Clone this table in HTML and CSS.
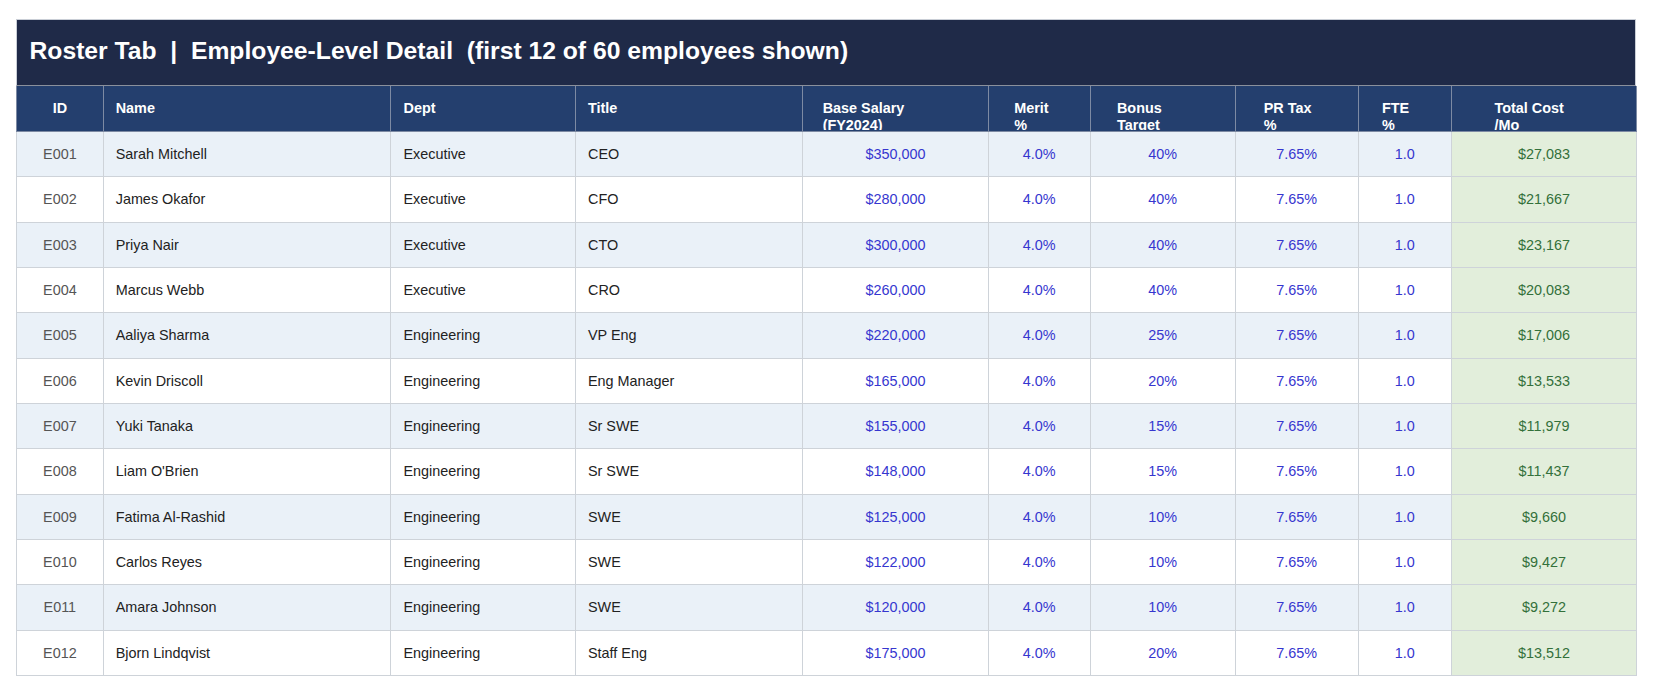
FILE: index.html
```html
<!DOCTYPE html>
<html lang="en">
<head>
<meta charset="utf-8">
<title>Roster Tab</title>
<link rel="stylesheet" href="styles.css">
</head>
<body>
<div class="sheet">
  <div class="title">Roster Tab  |  Employee-Level Detail  (first 12 of 60 employees shown)</div>
  <table class="roster">
    <colgroup>
      <col class="c-id"><col class="c-name"><col class="c-dept"><col class="c-title"><col class="c-base"><col class="c-merit"><col class="c-bonus"><col class="c-tax"><col class="c-fte"><col class="c-total">
    </colgroup>
    <thead>
      <tr>
        <th class="h-id"><div class="hd">ID</div></th>
        <th class="h-left"><div class="hd">Name</div></th>
        <th class="h-left"><div class="hd">Dept</div></th>
        <th class="h-left"><div class="hd">Title</div></th>
        <th class="h-base"><div class="hd">Base Salary
(FY2024)</div></th>
        <th class="h-merit"><div class="hd">Merit
%</div></th>
        <th class="h-bonus"><div class="hd">Bonus
Target</div></th>
        <th class="h-tax"><div class="hd">PR Tax
%</div></th>
        <th class="h-fte"><div class="hd">FTE
%</div></th>
        <th class="h-total"><div class="hd">Total Cost
/Mo</div></th>
      </tr>
    </thead>
    <tbody>
      <tr><td class="id">E001</td><td>Sarah Mitchell</td><td>Executive</td><td>CEO</td><td class="num">$350,000</td><td class="num">4.0%</td><td class="num">40%</td><td class="num">7.65%</td><td class="num">1.0</td><td class="total">$27,083</td></tr>
      <tr><td class="id">E002</td><td>James Okafor</td><td>Executive</td><td>CFO</td><td class="num">$280,000</td><td class="num">4.0%</td><td class="num">40%</td><td class="num">7.65%</td><td class="num">1.0</td><td class="total">$21,667</td></tr>
      <tr><td class="id">E003</td><td>Priya Nair</td><td>Executive</td><td>CTO</td><td class="num">$300,000</td><td class="num">4.0%</td><td class="num">40%</td><td class="num">7.65%</td><td class="num">1.0</td><td class="total">$23,167</td></tr>
      <tr><td class="id">E004</td><td>Marcus Webb</td><td>Executive</td><td>CRO</td><td class="num">$260,000</td><td class="num">4.0%</td><td class="num">40%</td><td class="num">7.65%</td><td class="num">1.0</td><td class="total">$20,083</td></tr>
      <tr><td class="id">E005</td><td>Aaliya Sharma</td><td>Engineering</td><td>VP Eng</td><td class="num">$220,000</td><td class="num">4.0%</td><td class="num">25%</td><td class="num">7.65%</td><td class="num">1.0</td><td class="total">$17,006</td></tr>
      <tr><td class="id">E006</td><td>Kevin Driscoll</td><td>Engineering</td><td>Eng Manager</td><td class="num">$165,000</td><td class="num">4.0%</td><td class="num">20%</td><td class="num">7.65%</td><td class="num">1.0</td><td class="total">$13,533</td></tr>
      <tr><td class="id">E007</td><td>Yuki Tanaka</td><td>Engineering</td><td>Sr SWE</td><td class="num">$155,000</td><td class="num">4.0%</td><td class="num">15%</td><td class="num">7.65%</td><td class="num">1.0</td><td class="total">$11,979</td></tr>
      <tr><td class="id">E008</td><td>Liam O'Brien</td><td>Engineering</td><td>Sr SWE</td><td class="num">$148,000</td><td class="num">4.0%</td><td class="num">15%</td><td class="num">7.65%</td><td class="num">1.0</td><td class="total">$11,437</td></tr>
      <tr><td class="id">E009</td><td>Fatima Al-Rashid</td><td>Engineering</td><td>SWE</td><td class="num">$125,000</td><td class="num">4.0%</td><td class="num">10%</td><td class="num">7.65%</td><td class="num">1.0</td><td class="total">$9,660</td></tr>
      <tr><td class="id">E010</td><td>Carlos Reyes</td><td>Engineering</td><td>SWE</td><td class="num">$122,000</td><td class="num">4.0%</td><td class="num">10%</td><td class="num">7.65%</td><td class="num">1.0</td><td class="total">$9,427</td></tr>
      <tr><td class="id">E011</td><td>Amara Johnson</td><td>Engineering</td><td>SWE</td><td class="num">$120,000</td><td class="num">4.0%</td><td class="num">10%</td><td class="num">7.65%</td><td class="num">1.0</td><td class="total">$9,272</td></tr>
      <tr><td class="id">E012</td><td>Bjorn Lindqvist</td><td>Engineering</td><td>Staff Eng</td><td class="num">$175,000</td><td class="num">4.0%</td><td class="num">20%</td><td class="num">7.65%</td><td class="num">1.0</td><td class="total">$13,512</td></tr>
    </tbody>
  </table>
</div>
</body>
</html>
```

FILE: styles.css
```css
html, body {
  margin: 0;
  padding: 0;
  background: #ffffff;
}

body {
  font-family: "Liberation Sans", Arial, sans-serif;
  color: #222222;
}

.sheet {
  padding: 19px 0 0 16px;
  width: 1620px;
}

.title {
  box-sizing: border-box;
  height: 67px;
  padding: 0 0 4px 12.5px;
  display: flex;
  align-items: center;
  background: #1f2a48;
  border: 1px solid #c9ced6;
  border-bottom-color: #8a909c;
  color: #ffffff;
  font-weight: bold;
  font-size: 24.7px;
  white-space: pre;
}

.roster {
  width: 1620px;
  table-layout: fixed;
  border-collapse: collapse;
  font-size: 14.4px;
}

.c-id { width: 86.7px; }
.c-name { width: 287.8px; }
.c-dept { width: 184.5px; }
.c-title { width: 227.3px; }
.c-base { width: 185.4px; }
.c-merit { width: 102px; }
.c-bonus { width: 145px; }
.c-tax { width: 123px; }
.c-fte { width: 93.3px; }
.c-total { width: 185px; }

.roster th {
  height: 45px;
  padding: 0;
  vertical-align: top;
  background: #243f6e;
  color: #ffffff;
  font-weight: bold;
  text-align: left;
  border: 1px solid #7d8aa3;
  border-top: 0;
}

.roster th .hd {
  box-sizing: border-box;
  height: 44px;
  overflow: hidden;
  padding-top: 13.5px;
  line-height: 17.28px;
  white-space: pre-line;
}

.roster th.h-id { text-align: center; }
.h-left .hd { padding-left: 12px; }
.h-base .hd { padding-left: 19.4px; }
.h-merit .hd { padding-left: 25.6px; }
.h-bonus .hd { padding-left: 26.3px; }
.h-tax .hd { padding-left: 28px; }
.h-fte .hd { padding-left: 23.3px; }
.h-total .hd { padding-left: 42.6px; }

.roster td {
  height: 44.33px;
  padding: 0 12px;
  vertical-align: middle;
  border: 1px solid #ced3d9;
  white-space: nowrap;
}

.roster tbody tr:nth-child(odd) td {
  background: #eaf1f8;
}

.roster td.id {
  text-align: center;
  color: #555555;
  padding: 0;
}

.roster td.num {
  text-align: center;
  color: #3636cf;
  padding: 0;
}

.roster tbody tr td.total {
  text-align: center;
  color: #33703a;
  background: #e2eedb;
  padding: 0;
}
```
